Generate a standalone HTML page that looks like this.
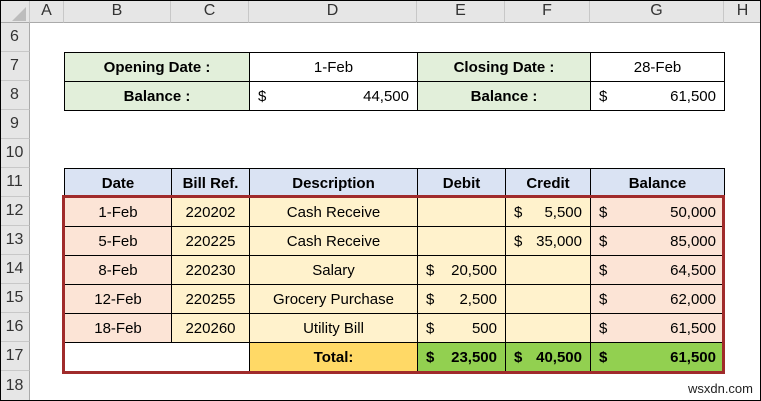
<!DOCTYPE html><html><head><style>
body{margin:0;width:761px;height:401px;overflow:hidden;background:#fff;font-family:"Liberation Sans",sans-serif;font-size:15px;color:#000;position:relative}
.f{position:absolute;inset:0;border:1px solid #000;box-sizing:border-box;pointer-events:none;z-index:9}
.h{position:absolute;background:#e6e6e6;color:#333;font-size:16px;display:flex;align-items:center;justify-content:center;box-sizing:border-box}
.c{position:absolute;box-sizing:border-box;border:1px solid #000;display:flex;align-items:center;justify-content:center;padding:0 8px}
.b{font-weight:bold}
.m{justify-content:space-between}
.g{background:#e2efda}.p{background:#fce4d6}.y{background:#fff2cc}.bl{background:#dae3f3}.o{background:#ffd966}.gr{background:#92d050}
</style></head><body>
<div class="f"></div>
<div class="h" style="left:0;top:0;width:30px;height:23px;border-right:1px solid #c8c8c8;border-bottom:1px solid #aaa"><svg width="14" height="14" style="margin:6px 0 0 8px"><path d="M14 0L14 14L0 14Z" fill="#bdbdbd"/></svg></div>
<div class="h" style="left:30px;top:0;width:34px;height:23px;border-right:1px solid #c8c8c8;border-bottom:1px solid #aaa">A</div>
<div class="h" style="left:64px;top:0;width:107px;height:23px;border-right:1px solid #c8c8c8;border-bottom:1px solid #aaa">B</div>
<div class="h" style="left:171px;top:0;width:78px;height:23px;border-right:1px solid #c8c8c8;border-bottom:1px solid #aaa">C</div>
<div class="h" style="left:249px;top:0;width:168px;height:23px;border-right:1px solid #c8c8c8;border-bottom:1px solid #aaa">D</div>
<div class="h" style="left:417px;top:0;width:88px;height:23px;border-right:1px solid #c8c8c8;border-bottom:1px solid #aaa">E</div>
<div class="h" style="left:505px;top:0;width:85px;height:23px;border-right:1px solid #c8c8c8;border-bottom:1px solid #aaa">F</div>
<div class="h" style="left:590px;top:0;width:134px;height:23px;border-right:1px solid #c8c8c8;border-bottom:1px solid #aaa">G</div>
<div class="h" style="left:724px;top:0;width:37px;height:23px;border-bottom:1px solid #aaa">H</div>
<div class="h" style="left:0;top:23px;width:30px;height:29px;border-right:1px solid #aaa;border-bottom:1px solid #c8c8c8">6</div>
<div class="h" style="left:0;top:52px;width:30px;height:29px;border-right:1px solid #aaa;border-bottom:1px solid #c8c8c8">7</div>
<div class="h" style="left:0;top:81px;width:30px;height:29px;border-right:1px solid #aaa;border-bottom:1px solid #c8c8c8">8</div>
<div class="h" style="left:0;top:110px;width:30px;height:29px;border-right:1px solid #aaa;border-bottom:1px solid #c8c8c8">9</div>
<div class="h" style="left:0;top:139px;width:30px;height:29px;border-right:1px solid #aaa;border-bottom:1px solid #c8c8c8">10</div>
<div class="h" style="left:0;top:168px;width:30px;height:29px;border-right:1px solid #aaa;border-bottom:1px solid #c8c8c8">11</div>
<div class="h" style="left:0;top:197px;width:30px;height:29px;border-right:1px solid #aaa;border-bottom:1px solid #c8c8c8">12</div>
<div class="h" style="left:0;top:226px;width:30px;height:29px;border-right:1px solid #aaa;border-bottom:1px solid #c8c8c8">13</div>
<div class="h" style="left:0;top:255px;width:30px;height:29px;border-right:1px solid #aaa;border-bottom:1px solid #c8c8c8">14</div>
<div class="h" style="left:0;top:284px;width:30px;height:29px;border-right:1px solid #aaa;border-bottom:1px solid #c8c8c8">15</div>
<div class="h" style="left:0;top:313px;width:30px;height:29px;border-right:1px solid #aaa;border-bottom:1px solid #c8c8c8">16</div>
<div class="h" style="left:0;top:342px;width:30px;height:29px;border-right:1px solid #aaa;border-bottom:1px solid #c8c8c8">17</div>
<div class="h" style="left:0;top:371px;width:30px;height:30px;border-right:1px solid #aaa">18</div>
<div class="c g b" style="left:64px;top:52px;width:186px;height:30px">Opening Date :</div>
<div class="c" style="left:249px;top:52px;width:169px;height:30px">1-Feb</div>
<div class="c g b" style="left:417px;top:52px;width:174px;height:30px">Closing Date :</div>
<div class="c" style="left:590px;top:52px;width:135px;height:30px">28-Feb</div>
<div class="c g b" style="left:64px;top:81px;width:186px;height:30px">Balance :</div>
<div class="c m" style="left:249px;top:81px;width:169px;height:30px"><span>$</span><span>44,500</span></div>
<div class="c g b" style="left:417px;top:81px;width:174px;height:30px">Balance :</div>
<div class="c m" style="left:590px;top:81px;width:135px;height:30px"><span>$</span><span>61,500</span></div>
<div class="c bl b" style="left:64px;top:168px;width:108px;height:30px">Date</div>
<div class="c bl b" style="left:171px;top:168px;width:79px;height:30px">Bill Ref.</div>
<div class="c bl b" style="left:249px;top:168px;width:169px;height:30px">Description</div>
<div class="c bl b" style="left:417px;top:168px;width:89px;height:30px">Debit</div>
<div class="c bl b" style="left:505px;top:168px;width:86px;height:30px">Credit</div>
<div class="c bl b" style="left:590px;top:168px;width:135px;height:30px">Balance</div>
<div class="c p" style="left:64px;top:197px;width:108px;height:30px">1-Feb</div>
<div class="c y" style="left:171px;top:197px;width:79px;height:30px">220202</div>
<div class="c y" style="left:249px;top:197px;width:169px;height:30px">Cash Receive</div>
<div class="c y" style="left:417px;top:197px;width:89px;height:30px"></div>
<div class="c y m" style="left:505px;top:197px;width:86px;height:30px"><span>$</span><span>5,500</span></div>
<div class="c p m" style="left:590px;top:197px;width:135px;height:30px"><span>$</span><span>50,000</span></div>
<div class="c p" style="left:64px;top:226px;width:108px;height:30px">5-Feb</div>
<div class="c y" style="left:171px;top:226px;width:79px;height:30px">220225</div>
<div class="c y" style="left:249px;top:226px;width:169px;height:30px">Cash Receive</div>
<div class="c y" style="left:417px;top:226px;width:89px;height:30px"></div>
<div class="c y m" style="left:505px;top:226px;width:86px;height:30px"><span>$</span><span>35,000</span></div>
<div class="c p m" style="left:590px;top:226px;width:135px;height:30px"><span>$</span><span>85,000</span></div>
<div class="c p" style="left:64px;top:255px;width:108px;height:30px">8-Feb</div>
<div class="c y" style="left:171px;top:255px;width:79px;height:30px">220230</div>
<div class="c y" style="left:249px;top:255px;width:169px;height:30px">Salary</div>
<div class="c y m" style="left:417px;top:255px;width:89px;height:30px"><span>$</span><span>20,500</span></div>
<div class="c y" style="left:505px;top:255px;width:86px;height:30px"></div>
<div class="c p m" style="left:590px;top:255px;width:135px;height:30px"><span>$</span><span>64,500</span></div>
<div class="c p" style="left:64px;top:284px;width:108px;height:30px">12-Feb</div>
<div class="c y" style="left:171px;top:284px;width:79px;height:30px">220255</div>
<div class="c y" style="left:249px;top:284px;width:169px;height:30px">Grocery Purchase</div>
<div class="c y m" style="left:417px;top:284px;width:89px;height:30px"><span>$</span><span>2,500</span></div>
<div class="c y" style="left:505px;top:284px;width:86px;height:30px"></div>
<div class="c p m" style="left:590px;top:284px;width:135px;height:30px"><span>$</span><span>62,000</span></div>
<div class="c p" style="left:64px;top:313px;width:108px;height:30px">18-Feb</div>
<div class="c y" style="left:171px;top:313px;width:79px;height:30px">220260</div>
<div class="c y" style="left:249px;top:313px;width:169px;height:30px">Utility Bill</div>
<div class="c y m" style="left:417px;top:313px;width:89px;height:30px"><span>$</span><span>500</span></div>
<div class="c y" style="left:505px;top:313px;width:86px;height:30px"></div>
<div class="c p m" style="left:590px;top:313px;width:135px;height:30px"><span>$</span><span>61,500</span></div>
<div class="c" style="left:64px;top:342px;width:186px;height:30px"></div>
<div class="c o b" style="left:249px;top:342px;width:169px;height:30px">Total:</div>
<div class="c gr b m" style="left:417px;top:342px;width:89px;height:30px"><span>$</span><span>23,500</span></div>
<div class="c gr b m" style="left:505px;top:342px;width:86px;height:30px"><span>$</span><span>40,500</span></div>
<div class="c gr b m" style="left:590px;top:342px;width:135px;height:30px"><span>$</span><span>61,500</span></div>
<div style="position:absolute;left:62px;top:195px;width:663px;height:179px;border:3px solid #a02b2b;box-sizing:border-box;z-index:5"></div>
<div style="position:absolute;right:8px;bottom:5px;font-size:13px;color:#222">wsxdn.com</div>
</body></html>
